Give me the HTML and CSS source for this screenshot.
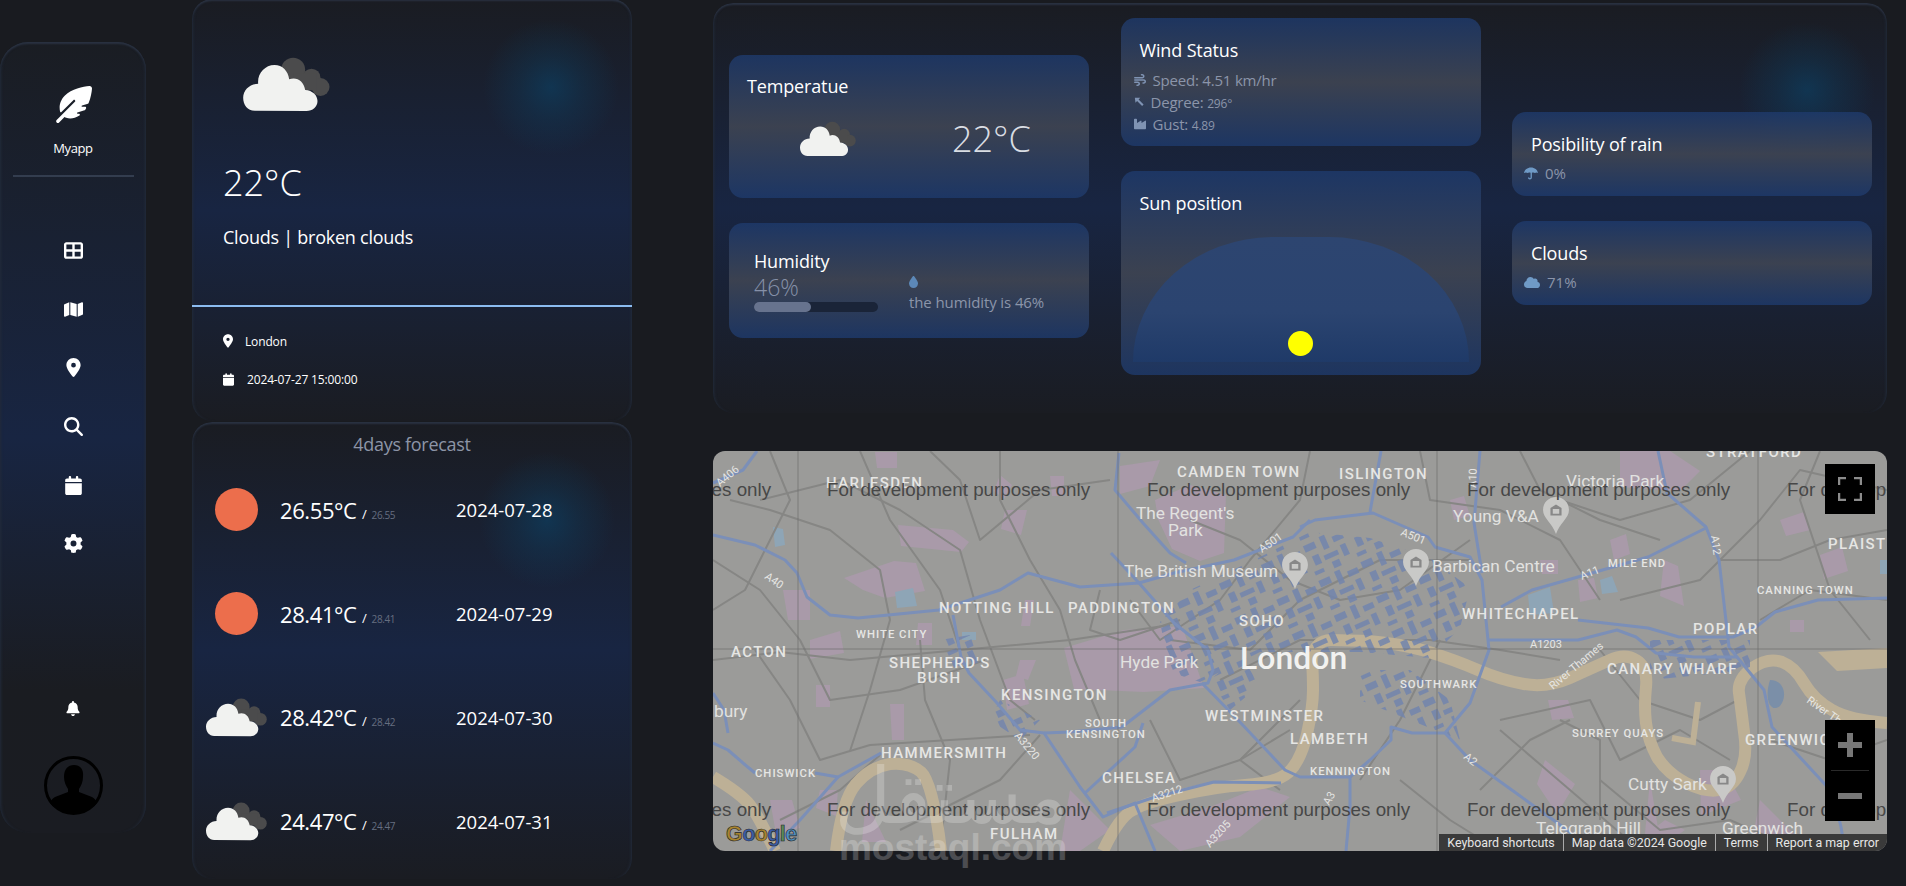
FILE: index.html

```html
<!DOCTYPE html>
<html lang="en">
<head>
    <meta charset="UTF-8">
    <title>Myapp Weather</title>
    <link rel="stylesheet" href="styles.css">
</head>
<body>
<svg class="defs" width="0" height="0">
    <symbol id="clouds" viewBox="130 50 260 165">
        <g fill="#4b4b4c">
            <circle cx="280" cy="88" r="36"/>
            <circle cx="335" cy="112" r="27"/>
            <circle cx="362" cy="140" r="27"/>
            <rect x="280" y="100" width="70" height="50"/>
        </g>
        <path fill="#f1f2f0" d="M165 211C143 211 130 193 130 172C130 148 150 131 175 130C172 100 195 74 224 74C248 74 265 92 268 117C290 108 312 122 316 149C338 150 353 165 353 182C353 200 338 212 320 212Z"/>
    </symbol>
    <symbol id="i-pin" viewBox="0 0 384 512"><path d="M215.7 499.2C267 435 384 279.4 384 192C384 86 298 0 192 0S0 86 0 192c0 87.4 117 243 168.3 307.2c12.3 15.3 35.1 15.3 47.4 0zM192 128a64 64 0 1 1 0 128 64 64 0 1 1 0-128z"/></symbol>
    <symbol id="i-cal" viewBox="0 0 448 512"><path d="M96 32V64H48C21.5 64 0 85.5 0 112v48H448V112c0-26.5-21.5-48-48-48H352V32c0-17.7-14.3-32-32-32s-32 14.3-32 32V64H160V32c0-17.7-14.3-32-32-32S96 14.3 96 32zM448 192H0V464c0 26.5 21.5 48 48 48H400c26.5 0 48-21.5 48-48V192z"/></symbol>
    <symbol id="i-mpin" viewBox="0 0 28 40"><path fill="#c9c9c7" d="M14 0C6 0 0 6 0 14c0 9 10 14 14 26c4-12 14-17 14-26C28 6 22 0 14 0z"/><path fill="#888" d="M8 12l6-4 6 4v8H8zM10.500 13v5h7v-5z"/></symbol>
</svg>

<div class="page">
    <aside class="sidebar">
        <div class="brand">
            <svg class="feather" viewBox="0 0 512 512"><path d="M278.5 215.6L23 471c-9.4 9.4-9.4 24.6 0 33.9s24.6 9.4 33.9 0l74.8-74.8c7.4 4.6 15.3 8.2 23.8 10.5C200.3 452.8 270 454.5 338 409.4c12.2-8.1 5.8-25.4-8.8-25.4l-16.1 0c-5.1 0-9.2-4.1-9.2-9.2c0-4.1 2.7-7.6 6.5-8.8l97.7-29.3c3.4-1 6.4-3.1 8.4-6.1c4.4-6.4 8.6-12.9 12.6-19.6c6.2-10.3-1.5-23-13.5-23l-38.6 0c-5.1 0-9.2-4.1-9.2-9.2c0-4.1 2.7-7.6 6.5-8.8l80.9-24.3c4.6-1.4 8.4-4.8 10.2-9.3C494.5 163 507.8 86.1 511.9 36.8c.8-9.9-3-19.6-10-26.6s-16.7-10.8-26.6-10C391.5 7 228.5 40.5 137.4 131.6C57.3 211.7 56.7 302.3 71.3 356.4c2.1 7.9 12 9.6 17.8 3.8L253.6 195.8c6.2-6.2 16.4-6.2 22.6 0c5.4 5.4 6.1 13.6 2.2 19.8z"/></svg>
            <div class="brand-name">Myapp</div>
        </div>
        <nav class="nav">
            <svg viewBox="0 0 512 512"><path d="M448 96V224H288V96H448zm0 192V416H288V288H448zM224 224H64V96H224V224zM64 288H224V416H64V288zM64 32C28.7 32 0 60.7 0 96V416c0 35.3 28.7 64 64 64H448c35.3 0 64-28.7 64-64V96c0-35.3-28.7-64-64-64H64z"/></svg>
            <svg viewBox="0 0 576 512"><path d="M384 476.1L192 421.2V35.9L384 90.8V476.1zm32-1.2V88.4L543.1 37.5c15.8-6.3 32.9 5.3 32.9 22.3V394.6c0 9.8-6 18.6-15.1 22.3L416 474.8zM15.1 95.1L160 37.2V423.6L32.9 474.5C17.1 480.8 0 469.2 0 452.2V117.4c0-9.8 6-18.6 15.1-22.3z"/></svg>
            <svg><use href="#i-pin"/></svg>
            <svg viewBox="0 0 512 512"><path d="M416 208c0 45.9-14.9 88.3-40 122.7L502.6 457.4c12.5 12.5 12.5 32.8 0 45.3s-32.8 12.5-45.3 0L330.7 376c-34.4 25.2-76.8 40-122.7 40C93.1 416 0 322.9 0 208S93.1 0 208 0S416 93.1 416 208zM208 352a144 144 0 1 0 0-288 144 144 0 1 0 0 288z"/></svg>
            <svg><use href="#i-cal"/></svg>
            <svg viewBox="0 0 512 512"><path d="M495.9 166.6c3.2 8.7 .5 18.4-6.4 24.6l-43.3 39.4c1.1 8.3 1.7 16.8 1.7 25.4s-.6 17.1-1.7 25.4l43.3 39.4c6.9 6.2 9.6 15.9 6.4 24.6c-4.4 11.9-9.7 23.3-15.8 34.3l-4.7 8.1c-6.6 11-14 21.4-22.1 31.2c-5.9 7.2-15.7 9.6-24.5 6.8l-55.7-17.7c-13.4 10.3-28.2 18.9-44 25.4l-12.5 57.1c-2 9.1-9 16.3-18.2 17.8c-13.8 2.3-28 3.5-42.5 3.5s-28.7-1.2-42.5-3.5c-9.2-1.5-16.2-8.7-18.2-17.8l-12.5-57.1c-15.8-6.5-30.6-15.1-44-25.4L83.1 425.9c-8.8 2.8-18.6 .3-24.5-6.8c-8.1-9.8-15.5-20.2-22.1-31.2l-4.7-8.1c-6.1-11-11.4-22.4-15.8-34.3c-3.2-8.7-.5-18.4 6.4-24.6l43.3-39.4C64.6 273.1 64 264.6 64 256s.6-17.1 1.7-25.4L22.4 191.2c-6.9-6.2-9.6-15.9-6.4-24.6c4.4-11.9 9.7-23.3 15.8-34.3l4.7-8.1c6.6-11 14-21.4 22.1-31.2c5.9-7.2 15.7-9.6 24.5-6.8l55.7 17.7c13.4-10.3 28.2-18.9 44-25.4l12.5-57.1c2-9.1 9-16.3 18.2-17.8C227.3 1.2 241.5 0 256 0s28.7 1.2 42.5 3.5c9.2 1.5 16.2 8.7 18.2 17.8l12.5 57.1c15.8 6.5 30.6 15.1 44 25.4l55.7-17.7c8.8-2.8 18.6-.3 24.5 6.8c8.1 9.8 15.5 20.2 22.1 31.2l4.7 8.1c6.1 11 11.4 22.4 15.8 34.3zM256 336a80 80 0 1 0 0-160 80 80 0 1 0 0 160z"/></svg>
        </nav>
        <div class="side-bottom">
            <svg class="bell" viewBox="0 0 448 512"><path d="M224 0c-17.7 0-32 14.3-32 32V51.2C119 66 64 130.6 64 208v18.8c0 47-17.3 92.4-48.5 127.6l-7.4 8.3c-8.4 9.4-10.4 22.9-5.3 34.4S19.4 416 32 416H416c12.6 0 24-7.4 29.2-18.9s3.1-25-5.3-34.4l-7.4-8.3C401.3 319.2 384 273.9 384 226.8V208c0-77.4-55-142-128-156.8V32c0-17.7-14.3-32-32-32zm45.3 493.3c12-12 18.7-28.3 18.7-45.3H224 160c0 17 6.7 33.3 18.7 45.3s28.3 18.7 45.3 18.7s33.3-6.7 45.3-18.7z"/></svg>
            <svg class="avatar" viewBox="0 0 59 59">
                <circle cx="29.5" cy="29.5" r="28" fill="none" stroke="#000" stroke-width="3"/>
                <path d="M20 21c0-8 4-12 10-12s10 4 9 12c0 5-2 9-4 12v3l13 5c2 1 4 3 5 6c-5 6-14 10-23.500 10S11 53 6 47c1-3 3-5 5-6l13-5v-3c-2-3-4-7-4-12z"/>
            </svg>
        </div>
    </aside>

    <section class="left-col">
        <div class="card now">
            <div class="now-top">
                <svg class="icon-big"><use href="#clouds"/></svg>
                <div class="now-temp">22°C</div>
                <div class="now-desc">Clouds | broken clouds</div>
            </div>
            <div class="now-meta">
                <div class="meta-row"><svg class="meta-pin"><use href="#i-pin"/></svg>London</div>
                <div class="meta-row meta-date"><svg class="meta-cal"><use href="#i-cal"/></svg>2024-07-27 15:00:00</div>
            </div>
        </div>
        <div class="card forecast">
            <div class="forecast-title">4days forecast</div>
            <div class="fc-row">
                <div class="fc-icon"><span class="sun-dot"></span></div>
                <div class="fc-temp">26.55°C <small>/</small> <span class="fc-min">26.55</span></div>
                <div class="fc-date">2024-07-28</div>
            </div>
            <div class="fc-row">
                <div class="fc-icon"><span class="sun-dot"></span></div>
                <div class="fc-temp">28.41°C <small>/</small> <span class="fc-min">28.41</span></div>
                <div class="fc-date">2024-07-29</div>
            </div>
            <div class="fc-row">
                <div class="fc-icon"><svg class="icon-fc"><use href="#clouds"/></svg></div>
                <div class="fc-temp">28.42°C <small>/</small> <span class="fc-min">28.42</span></div>
                <div class="fc-date">2024-07-30</div>
            </div>
            <div class="fc-row">
                <div class="fc-icon"><svg class="icon-fc"><use href="#clouds"/></svg></div>
                <div class="fc-temp">24.47°C <small>/</small> <span class="fc-min">24.47</span></div>
                <div class="fc-date">2024-07-31</div>
            </div>
        </div>
    </section>

    <main class="right-col">
        <div class="card panel">
            <div class="col col-a">
                <div class="tile tile-temp">
                    <h4>Temperatue</h4>
                    <div class="temp-body">
                        <svg class="icon-mid"><use href="#clouds"/></svg>
                        <span class="temp-val">22°C</span>
                    </div>
                </div>
                <div class="tile tile-hum">
                    <div class="hum-left">
                        <h4>Humidity</h4>
                        <div class="hum-val">46%</div>
                        <div class="bar"><div class="bar-fill" style="width: 46%"></div></div>
                    </div>
                    <div class="hum-right">
                        <svg class="drop" viewBox="0 0 384 512"><path d="M192 512C86 512 0 426 0 320C0 228.800 130.200 57.700 166.600 11.700C172.600 4.200 181.500 0 191.100 0h1.800c9.600 0 18.500 4.200 24.500 11.700C253.800 57.700 384 228.800 384 320c0 106-86 192-192 192z"/></svg>
                        <div class="sub">the humidity is 46%</div>
                    </div>
                </div>
            </div>
            <div class="col col-b">
                <div class="tile tile-wind">
                    <h4>Wind Status</h4>
                    <div class="wind-row">
                        <svg class="mini" viewBox="0 0 512 512"><path d="M288 32c0 17.700 14.300 32 32 32h32c17.700 0 32 14.300 32 32s-14.300 32-32 32H32c-17.700 0-32 14.300-32 32s14.300 32 32 32H352c53 0 96-43 96-96s-43-96-96-96H320c-17.700 0-32 14.300-32 32zm64 352c0 17.700 14.300 32 32 32h32c53 0 96-43 96-96s-43-96-96-96H32c-17.700 0-32 14.300-32 32s14.300 32 32 32H416c17.700 0 32 14.300 32 32s-14.300 32-32 32H384c-17.700 0-32 14.300-32 32zM128 512h32c53 0 96-43 96-96s-43-96-96-96H32c-17.700 0-32 14.300-32 32s14.300 32 32 32H160c17.700 0 32 14.300 32 32s-14.300 32-32 32H128c-17.700 0-32 14.300-32 32s14.300 32 32 32z"/></svg>
                        <span>Speed: 4.51 km/hr</span>
                    </div>
                    <div class="wind-row">
                        <svg class="mini mini-arrow" viewBox="0 0 12 12"><path d="M1 1h6.500L5.500 3l6 6-1.800 1.800-6-6L1.800 7z"/></svg>
                        <span>Degree: <small>296°</small></span>
                    </div>
                    <div class="wind-row">
                        <svg class="mini" viewBox="0 0 512 512"><path d="M32 32C14.300 32 0 46.300 0 64V448c0 17.700 14.300 32 32 32H480c17.700 0 32-14.300 32-32V135.100c0-18.400-20-30-36-20.700L320 214.800V135.100c0-18.400-20-30-36-20.700L128 214.800V64c0-17.700-14.300-32-32-32H32z"/></svg>
                        <span>Gust: <small>4.89</small></span>
                    </div>
                </div>
                <div class="tile tile-sun">
                    <h4>Sun position</h4>
                    <div class="sun-arc"><span class="sun-ball"></span></div>
                </div>
            </div>
            <div class="col col-c">
                <div class="tile tile-small">
                    <h4>Posibility of rain</h4>
                    <div class="small-row">
                        <svg class="mini-blue" viewBox="0 0 16 14"><path d="M8 0c4 0 7.500 2.500 8 6.500c-1-1-2.500-1-3.500 0c-.8-.8-2.200-1-3.500-.3V11.500c0 3-4.500 3-4.500 0h1.500c0 1.200 1.500 1.200 1.500 0V6.200c-1.300-.7-2.700-.5-3.500.3c-1-1-2.500-1-4 0C.5 2.500 4 0 8 0z"/></svg>
                        <span>0%</span>
                    </div>
                </div>
                <div class="tile tile-small">
                    <h4>Clouds</h4>
                    <div class="small-row">
                        <svg class="mini-blue mini-cloud" viewBox="0 0 640 512"><path d="M0 336c0 79.500 64.500 144 144 144H512c70.700 0 128-57.300 128-128c0-61.900-44-113.600-102.400-125.400c4.100-10.700 6.400-22.400 6.400-34.600c0-53-43-96-96-96c-19.700 0-38.100 6-53.300 16.200C367 64.200 315.300 32 256 32C167.600 32 96 103.600 96 192c0 2.700 .1 5.400 .2 8.100C40.200 219.800 0 273.200 0 336z"/></svg>
                        <span>71%</span>
                    </div>
                </div>
            </div>
        </div>

        <div class="map">
            <svg class="map-canvas" viewBox="713 451 1174 400">
                <defs>
                    <pattern id="blocks" width="46" height="38" patternUnits="userSpaceOnUse" patternTransform="rotate(-24)">
                        <path fill="#7385ad" d="M2 3h12v7H2zM20 1h6v14h-6zM32 6h11v6H32zM6 16h7v10H6zM17 20h15v5H17zM36 17h6v12h-6zM2 31h10v4H2zM22 29h8v7h-8z"/>
                    </pattern>
                </defs>

                <!-- parks and built up patches -->
                <g fill="#a99aa9">
                    <path d="M898 525l55 5 16 12-8 10-60-6zM844 578l50-17 22 2 9 28-40 7-22-8zM1064 648l60-18 58-4 22 62-60 4-70-3zM1155 500l35-15 36 10-2 58-24 8-28-12-14-30zM1120 466l40-6-10 26-30 8z"/>
                    <path d="M875 452h22v16h-20zM1000 475l12 10-8 14-10-8zM1005 510h22l-6 25-20-6zM1050 476h14v20h-12zM783 590h27v30h-22zM918 623h14v22h-16zM1025 600h9l-4 26h-9zM1020 660h16l-8 20-12-4zM1003 680l20-6 6 30-22 6zM810 640l30-9 4 22-34 6zM816 685h14v22h-14zM890 704h14v36h-12zM770 800h22l8 28-24 6zM820 790h18l-2 26-20-8zM866 800l20 42h-24zM1070 790l40 40-30 21h-20zM1150 825l60-18 50-20 30 10-50 40-60 14z"/>
                    <path d="M1620 451h50l30 20-20 20-60-4zM1450 500l14-4 6 20-16 4zM1664 560l14 6 6 40-24-10zM1610 540l16-6 4 20-16 6zM1540 560h18v14h-16zM1578 580l16-2 4 20-18 4zM1820 555l22-8 6 24-24 8zM1790 620h14v12h-14zM1548 700h20l6 18-22 2zM1545 760l30 24-18 30-20-30zM1650 780l10 60-16 4zM1700 770h25l16 30-40 16zM1665 820l20 10-30 21h-30zM1780 520l24-8 6 18-24 6zM1760 800l30 30 20 21h-60z"/>
                </g>
                <g fill="#8ea5b6">
                    <path d="M773 527l10 2 2 16-10 2zM962 632h14v8h-14zM895 592l18-4 4 18-20 2zM1528 595l22-8 4 26-24 2zM1600 580l12-4 6 16-16 2zM1880 560h7v14h-7z"/>
                </g>

                <!-- minor roads -->
                <g class="road-minor">
                    <polyline points="713,610 745,590 760,560 790,500 770,451"/>
                    <polyline points="760,500 840,480 900,510 960,550 980,620 1010,700 1035,720"/>
                    <polyline points="860,451 890,520 940,590 960,650"/>
                    <polyline points="713,660 780,652 850,660 960,650 1070,640 1170,625"/>
                    <polyline points="755,650 790,700 820,760 870,745 1030,735"/>
                    <polyline points="930,451 960,480 980,540 1040,490 1110,480"/>
                    <polyline points="1100,590 1090,630 1120,640 1180,620"/>
                    <polyline points="780,820 840,790 880,755"/>
                    <polyline points="1220,680 1300,640 1430,640 1500,650 1560,660"/>
                    <polyline points="1170,640 1250,650 1300,600 1380,560 1470,560"/>
                    <polyline points="1500,730 1570,790 1640,850"/>
                    <polyline points="1500,720 1590,700 1620,760 1680,730 1730,760"/>
                    <polyline points="1560,500 1620,520 1690,500 1750,451"/>
                    <polyline points="1620,600 1700,580 1760,520 1800,470 1887,490"/>
                    <polyline points="1760,620 1810,590 1887,600"/>
                    <polyline points="1600,650 1640,700 1700,720 1738,700"/>
                    <polyline points="1360,780 1400,720 1440,640"/>
                    <polyline points="1280,790 1240,760 1300,700"/>
                    <polyline points="730,500 770,510 830,530 880,570 890,620 870,690 850,751"/>
                    <polyline points="713,560 760,590 800,640 830,700 900,690 985,660"/>
                    <polyline points="920,640 925,700 950,760 940,851"/>
                    <polyline points="1040,735 1000,780 960,800 900,830"/>
                    <polyline points="1000,451 1000,500 1030,560 1060,610 1075,660 1100,720"/>
                    <polyline points="1130,600 1160,640 1220,600 1250,560 1300,500 1310,451"/>
                    <polyline points="1150,720 1180,780 1240,760 1290,730"/>
                    <polyline points="1190,520 1240,540 1290,580 1340,600 1400,590 1470,540"/>
                    <polyline points="1420,451 1430,500 1500,510 1560,540 1600,600"/>
                    <polyline points="1520,451 1540,490 1600,520 1660,540"/>
                    <polyline points="1560,720 1600,740 1600,820"/>
                    <polyline points="1480,790 1530,740 1570,720"/>
                    <polyline points="1720,560 1780,560 1830,540 1887,530"/>
                    <polyline points="1770,740 1830,760 1887,740"/>
                    <polyline points="1400,780 1450,820 1500,851"/>
                    <polyline points="1600,780 1660,830 1730,820 1800,851"/>
                    <polyline points="1820,451 1800,500 1830,590 1870,640"/>
                </g>

                <!-- river -->
                <g class="river">
                    <path d="M1103 851Q1119 817 1133 810Q1147 802 1180 795Q1214 787 1245 785Q1277 783 1289 772Q1301 760 1307 734Q1313 707 1313 690Q1313 673 1312 662Q1312 650 1318 645Q1323 640 1331 640Q1339 640 1368 641Q1397 643 1426 651Q1455 660 1478 670Q1501 680 1524 684Q1547 688 1570 678Q1594 667 1610 660Q1625 653 1636 660Q1648 667 1646 687Q1644 707 1646 723Q1648 740 1657 757Q1667 773 1686 783Q1706 793 1720 790Q1733 787 1740 772Q1748 757 1744 732Q1741 707 1739 693Q1737 680 1752 668Q1768 657 1782 662Q1795 667 1804 683Q1814 700 1832 710Q1849 720 1887 723"/>
                    <path d="M836 851Q842 800 856 784Q870 767 890 764Q909 762 921 772Q933 783 941 851"/>
                    <path d="M713 777Q740 793 750 805Q759 817 775 851"/>
                </g>
                <polyline class="dock" points="1672,738 1693,742 1698,702"/>
                <path fill="#bdb096" d="M1818 652l69-4v20l-50 3z"/>

                <!-- city centre blocks -->
                <g class="blocks">
                    <path fill="url(#blocks)" d="M1190 590l60-28 60-30 60 6 60 20 40 30-10 40-30 30-70-6-100 0-60 30-30-10-10-50zM1360 670l50 0 40 30 10 40-50-20-50-20zM1210 680l30-25 20 30-30 25z"/>
                    <path fill="url(#blocks)" d="M1650 640l100 0 0 30-100 10zM1000 700l40 20-20 20-30-20zM940 640l30-5 10 30-30 5z"/>
                </g>
                <path fill="#7b8fa8" d="M1770 680c14 0 18 16 10 26c-10 8-16-8-10-26z"/>

                <!-- motorways -->
                <g class="road">
                    <polyline points="713,535 755,545 785,560 797,573 807,597 830,615 858,618 939,610 1000,590 1028,573 1080,587 1139,583 1174,573 1234,560 1293,537 1310,520"/>
                    <polyline points="953,615 961,657 969,673 997,703 1020,730 1044,733 1080,787 1103,817 1135,803 1155,851"/>
                    <polyline points="1044,733 1070,732 1122,727 1170,690 1208,683 1213,670 1208,650 1174,623 1139,583 1111,553"/>
                    <polyline points="1119,453 1115,490 1143,523 1170,553 1186,563"/>
                    <polyline points="881,753 838,777 815,773"/>
                    <polyline points="838,777 800,820 770,851"/>
                    <polyline points="757,451 743,470 713,483"/>
                    <polyline points="713,743 728,750 743,763 755,773"/>
                    <polyline points="713,693 724,710 728,733"/>
                    <polyline points="1202,683 1238,720 1285,770 1300,777 1350,777 1370,760 1391,740 1391,727 1412,733 1445,733 1470,703 1489,650 1482,580 1470,557 1435,547 1428,537 1373,513 1315,520 1300,527"/>
                    <polyline points="1480,451 1474,523 1482,573"/>
                    <polyline points="1381,451 1370,512"/>
                    <polyline points="1501,607 1532,590 1578,577 1648,557 1706,528"/>
                    <polyline points="1658,451 1667,493 1706,527 1719,560 1729,647 1737,657 1764,690 1772,727 1833,793 1841,827 1845,851"/>
                    <polyline points="1489,640 1578,640 1617,630 1636,637 1656,653 1694,657 1737,657"/>
                    <polyline points="1578,620 1648,628 1679,637 1733,637 1756,627 1775,612 1818,600 1887,598"/>
                    <polyline points="1445,733 1470,760 1516,793 1563,827 1594,851"/>
                    <polyline points="1350,777 1350,807 1346,851"/>
                    <polyline points="1085,793 1135,747 1143,723"/>
                    <polyline points="1107,813 1155,797 1214,782 1281,783"/>
                </g>

                <!-- tile seams -->
                <g class="seam">
                    <line x1="798" y1="451" x2="798" y2="851"/>
                    <line x1="1118" y1="451" x2="1118" y2="851"/>
                    <line x1="1437" y1="451" x2="1437" y2="851"/>
                    <line x1="1758" y1="451" x2="1758" y2="851"/>
                    <line x1="713" y1="649" x2="1887" y2="649"/>
                </g>

                <!-- pins -->
                <use href="#i-mpin" x="1282" y="552" width="26" height="37"/>
                <use href="#i-mpin" x="1403" y="549" width="26" height="37"/>
                <use href="#i-mpin" x="1543" y="497" width="26" height="37"/>
                <use href="#i-mpin" x="1710" y="766" width="26" height="37"/>

                <!-- place names -->
                <g class="lbl">
                    <text x="826" y="488">HARLESDEN</text>
                    <text x="1177" y="477">CAMDEN TOWN</text>
                    <text x="1339" y="479">ISLINGTON</text>
                    <text x="1706" y="457">STRATFORD</text>
                    <text x="1828" y="549">PLAIST</text>
                    <text x="939" y="613">NOTTING HILL</text>
                    <text x="1068" y="613">PADDINGTON</text>
                    <text x="1239" y="626">SOHO</text>
                    <text x="731" y="657">ACTON</text>
                    <text x="889" y="668">SHEPHERD'S</text>
                    <text x="917" y="683">BUSH</text>
                    <text x="1001" y="700">KENSINGTON</text>
                    <text x="1205" y="721">WESTMINSTER</text>
                    <text x="1290" y="744">LAMBETH</text>
                    <text x="881" y="758">HAMMERSMITH</text>
                    <text x="1102" y="783">CHELSEA</text>
                    <text x="990" y="839">FULHAM</text>
                    <text x="1462" y="619">WHITECHAPEL</text>
                    <text x="1693" y="634">POPLAR</text>
                    <text x="1607" y="674">CANARY WHARF</text>
                    <text x="1745" y="745">GREENWIC</text>
                </g>
                <g class="lbl lbl-small">
                    <text x="856" y="638">WHITE CITY</text>
                    <text x="755" y="777">CHISWICK</text>
                    <text x="1085" y="727">SOUTH</text>
                    <text x="1066" y="738">KENSINGTON</text>
                    <text x="1608" y="567">MILE END</text>
                    <text x="1757" y="594">CANNING TOWN</text>
                    <text x="1400" y="688">SOUTHWARK</text>
                    <text x="1572" y="737">SURREY QUAYS</text>
                    <text x="1310" y="775">KENNINGTON</text>
                </g>
                <g class="poi">
                    <text x="1136" y="519">The Regent's</text>
                    <text x="1168" y="536">Park</text>
                    <text x="1124" y="577">The British Museum</text>
                    <text x="1120" y="668">Hyde Park</text>
                    <text x="714" y="717">bury</text>
                    <text x="1566" y="487">Victoria Park</text>
                    <text x="1453" y="522">Young V&amp;A</text>
                    <text x="1432" y="572">Barbican Centre</text>
                    <text x="1628" y="790">Cutty Sark</text>
                    <text x="1536" y="834">Telegraph Hill</text>
                    <text x="1722" y="834">Greenwich</text>
                </g>
                <g class="rlbl">
                    <text transform="translate(764 578) rotate(35)">A40</text>
                    <text transform="translate(720 487) rotate(-40)">A406</text>
                    <text transform="translate(1014 736) rotate(50)">A3220</text>
                    <text transform="translate(1153 802) rotate(-18)">A3212</text>
                    <text transform="translate(1210 848) rotate(-48)">A3205</text>
                    <text transform="translate(1262 553) rotate(-35)">A501</text>
                    <text transform="translate(1400 535) rotate(22)">A501</text>
                    <text transform="translate(1582 580) rotate(-22)">A11</text>
                    <text transform="translate(1711 536) rotate(82)">A12</text>
                    <text transform="translate(1476 488) rotate(-88)">A10</text>
                    <text transform="translate(1463 758) rotate(38)">A2</text>
                    <text transform="translate(1329 806) rotate(-60)">A3</text>
                    <text x="1530" y="648">A1203</text>
                    <text transform="translate(1553 690) rotate(-40)">River Thames</text>
                    <text transform="translate(1806 702) rotate(35)">River Thames</text>
                </g>
                <text class="city" x="1240" y="669">London</text>

                <!-- dev watermark -->
                <g class="dev">
                    <text x="508" y="496">For development purposes only</text>
                    <text x="827" y="496">For development purposes only</text>
                    <text x="1147" y="496">For development purposes only</text>
                    <text x="1467" y="496">For development purposes only</text>
                    <text x="1787" y="496">For development purposes only</text>
                    <text x="508" y="816">For development purposes only</text>
                    <text x="827" y="816">For development purposes only</text>
                    <text x="1147" y="816">For development purposes only</text>
                    <text x="1467" y="816">For development purposes only</text>
                    <text x="1787" y="816">For development purposes only</text>
                </g>

                <text class="glogo" x="726" y="841"><tspan fill="#a8842f">G</tspan><tspan fill="#3b5da6">o</tspan><tspan fill="#a8842f">o</tspan><tspan fill="#3b5da6">g</tspan><tspan fill="#5a8a5a">l</tspan><tspan fill="#4f8fc0">e</tspan></text>
            </svg>

            <button class="map-btn btn-full">
                <svg viewBox="0 0 24 24"><path d="M1 8V1h7M16 1h7v7M23 16v7h-7M8 23H1v-7" fill="none" stroke="#8c8c8c" stroke-width="2.500"/></svg>
            </button>
            <div class="map-btn zoom-box">
                <div class="zoom-plus"></div>
                <div class="zoom-sep"></div>
                <div class="zoom-minus"></div>
            </div>
            <div class="attrib">
                <span>Keyboard shortcuts</span>
                <span>Map data ©2024 Google</span>
                <span>Terms</span>
                <span>Report a map error</span>
            </div>
        </div>
    </main>
</div>

<div class="stamp" aria-hidden="true">
    <div class="stamp-ar" dir="rtl" lang="ar">مستقل</div>
    <div class="stamp-en">mostaql.com</div>
</div>
</body>
</html>
```

FILE: styles.css

```css
* {
    box-sizing: border-box;
}
body {
    margin: 0;
    height: 886px;
    overflow: hidden;
    position: relative;
    background-color: #191b20;
    font-family: "Open Sans", "Noto Sans", sans-serif;
    color: #fff;
}
.defs {
    position: absolute;
}
.page {
    display: flex;
    align-items: flex-start;
}

/* shared dark glass card */
.card {
    border-radius: 20px;
    box-shadow: inset 0 3px 2px -1px #2a3242, inset 3px 0 3px -2px #232c3b, inset -3px 0 3px -2px #232c3b;
    background:
        radial-gradient(circle 68px at var(--glow-x, 88%) var(--glow-y, 87px), rgba(12, 66, 102, 0.62), rgba(12, 66, 102, 0.3) 45%, rgba(12, 66, 102, 0) 100%),
        linear-gradient(180deg, #1a1c22 0%, #182542 50%, #1a1c22 100%);
}

/* sidebar */
.sidebar {
    width: 146px;
    height: 791px;
    margin-top: 42px;
    border-radius: 28px;
    display: flex;
    flex-direction: column;
    align-items: center;
    box-shadow: inset 0 3px 2px -1px #2a3242, inset 3px 0 3px -2px #232c3b, inset -3px 0 3px -2px #232c3b;
    background: linear-gradient(180deg, #1a1d23 0%, #182542 50%, #1a1c21 82%, #1a1c22 100%);
}
.brand {
    width: 121px;
    height: 135px;
    padding-top: 44px;
    border-bottom: 2px solid #333d4f;
    text-align: center;
}
.feather {
    width: 37px;
    height: 37px;
    fill: #fff;
    display: block;
    margin: 0 auto;
}
.brand-name {
    margin-top: 16px;
    font-size: 13px;
    line-height: 18px;
    letter-spacing: -0.4px;
}
.nav {
    margin-top: 64px;
    display: flex;
    flex-direction: column;
    gap: 39.7px;
}
.nav svg {
    width: 19px;
    height: 19px;
    fill: #fff;
    display: block;
}
.side-bottom {
    margin-top: auto;
    padding-bottom: 18px;
    display: flex;
    flex-direction: column;
    align-items: center;
    gap: 40px;
}
.bell {
    width: 14px;
    height: 15px;
    fill: #fff;
}
.avatar {
    width: 59px;
    height: 59px;
    fill: #000;
}

/* left column */
.left-col {
    width: 440px;
    margin-left: 46px;
    margin-top: -1px;
    display: flex;
    flex-direction: column;
    gap: 1px;
}
.now {
    height: 422px;
    --glow-x: 359px;
    --glow-y: 88px;
}
.now-top {
    height: 308px;
    padding: 58px 0 0 31px;
    border-bottom: 2px solid #8cbcf0;
}
.icon-big {
    display: block;
    width: 87px;
    height: 55px;
    margin-left: 20px;
}
.now-temp {
    margin-top: 46px;
    font-size: 36px;
    font-weight: 300;
    line-height: 50px;
}
.now-desc {
    margin-top: 17px;
    font-size: 18px;
    line-height: 24px;
    letter-spacing: -0.25px;
}
.now-meta {
    padding: 26px 0 0 31px;
    font-size: 12px;
    letter-spacing: -0.15px;
}
.meta-row {
    display: flex;
    align-items: center;
    height: 16px;
}
.meta-date {
    margin-top: 22px;
}
.meta-pin {
    width: 10px;
    height: 14px;
    fill: #fff;
    margin-right: 12px;
}
.meta-cal {
    width: 11px;
    height: 13px;
    fill: #fff;
    margin-right: 13px;
}
.forecast {
    height: 457px;
    --glow-x: 355px;
    --glow-y: 98px;
}
.forecast-title {
    padding-top: 10px;
    height: 36px;
    text-align: center;
    color: #8d95a7;
    font-size: 18px;
    line-height: 24px;
    letter-spacing: -0.3px;
}
.fc-row {
    height: 103.8px;
    display: flex;
    align-items: center;
    padding-left: 14px;
}
.fc-icon {
    width: 74px;
    display: flex;
    align-items: center;
}
.sun-dot {
    width: 43px;
    height: 43px;
    margin-left: 9px;
    border-radius: 50%;
    background-color: #ec6e4c;
}
.icon-fc {
    width: 61px;
    height: 39px;
}
.fc-temp {
    width: 176px;
    font-size: 22px;
    letter-spacing: -0.4px;
    white-space: nowrap;
}
.fc-temp small {
    font-size: 13px;
}
.fc-min {
    font-size: 10px;
    color: #666e80;
    letter-spacing: -0.4px;
}
.fc-date {
    font-size: 18.5px;
}

/* right side */
.right-col {
    width: 1174px;
    margin-left: 81px;
    margin-top: 3px;
}
.panel {
    height: 410px;
    display: flex;
    align-items: flex-start;
    padding-left: 16px;
    gap: 31.5px;
    --glow-x: 1094px;
    --glow-y: 87px;
}
.col {
    width: 360px;
    display: flex;
    flex-direction: column;
    gap: 25px;
}
.col-a {
    margin-top: 52px;
}
.col-b {
    margin-top: 15px;
}
.col-c {
    margin-top: 109px;
}
.tile {
    border-radius: 14px;
    background: linear-gradient(180deg, rgba(30, 58, 108, 0.82) 0%, rgba(64, 70, 84, 0.88) 50%, rgba(30, 58, 108, 0.82) 100%);
}
.tile h4 {
    margin: 0;
    font-size: 18px;
    font-weight: 400;
    line-height: 24px;
    letter-spacing: -0.15px;
}
.tile-temp {
    height: 143px;
    padding: 19px 0 0 18px;
}
.temp-body {
    display: flex;
    align-items: center;
    margin-top: 16px;
}
.icon-mid {
    width: 56px;
    height: 36px;
    margin-left: 53px;
}
.temp-val {
    margin-left: 96px;
    font-size: 36px;
    font-weight: 300;
    line-height: 50px;
    color: #d9dde3;
}
.tile-hum {
    height: 115px;
    display: flex;
    padding: 26px 0 0 25px;
}
.hum-left {
    width: 155px;
}
.hum-val {
    font-size: 23px;
    font-weight: 300;
    line-height: 28px;
    color: #8590a8;
}
.bar {
    width: 124px;
    height: 10px;
    margin-top: 1px;
    border-radius: 5px;
    background-color: #1a2438;
}
.bar-fill {
    height: 100%;
    border-radius: 5px;
    background-color: #67738e;
}
.hum-right {
    padding-top: 27px;
}
.drop {
    display: block;
    width: 9px;
    height: 12px;
    fill: #5c88b8;
}
.sub {
    margin-top: 4px;
    font-size: 15px;
    line-height: 20px;
    letter-spacing: -0.1px;
    color: #8b95aa;
    white-space: nowrap;
}
.tile-wind {
    height: 128px;
    padding: 20px 0 0 13px;
}
.tile-wind h4 {
    padding-left: 6px;
    margin-bottom: 7px;
}
.wind-row {
    display: flex;
    align-items: center;
    gap: 7px;
    height: 22px;
    font-size: 15px;
    letter-spacing: -0.2px;
    color: #8b95aa;
    white-space: nowrap;
}
.wind-row small {
    font-size: 12px;
}
.mini {
    width: 12px;
    height: 12px;
    fill: #7f93b3;
}
.mini-arrow {
    width: 10px;
    height: 10px;
}
.tile-sun {
    height: 204px;
    padding: 20px 12px 0;
}
.tile-sun h4 {
    padding-left: 7px;
}
.sun-arc {
    height: 125px;
    margin-top: 22px;
    border-radius: 140px 140px 0 0 / 125px 125px 0 0;
    background: linear-gradient(180deg, #2d4570 0%, #2b4470 60%, #1f3a68 100%);
    display: flex;
    justify-content: center;
    padding-top: 94px;
}
.sun-ball {
    width: 25px;
    height: 25px;
    border-radius: 50%;
    background-color: #ff0;
}
.tile-small {
    height: 84px;
    padding: 20px 0 0 12px;
}
.tile-small h4 {
    padding-left: 7px;
}
.small-row {
    display: flex;
    align-items: center;
    gap: 7px;
    margin-top: 7px;
    font-size: 15px;
    line-height: 20px;
    color: #8b95aa;
}
.mini-blue {
    width: 14px;
    height: 13px;
    fill: #6f9ac6;
}
.mini-cloud {
    width: 16px;
}

/* map */
.map {
    position: relative;
    height: 400px;
    margin-top: 38px;
    border-radius: 12px;
    overflow: hidden;
    background-color: #9b9b99;
}
.map-canvas {
    display: block;
    width: 100%;
    height: 100%;
}
.road-minor polyline {
    fill: none;
    stroke: #868684;
    stroke-width: 2;
    stroke-linejoin: round;
}
.road polyline {
    fill: none;
    stroke: #7b8fb8;
    stroke-width: 3;
    stroke-linejoin: round;
}
.river path {
    fill: none;
    stroke: #bdb096;
    stroke-width: 12;
}
.dock {
    fill: none;
    stroke: #bdb096;
    stroke-width: 6;
}
.blocks {
    opacity: 0.85;
}
.seam line {
    stroke: #6e6e6e;
    stroke-width: 0.7;
}
.lbl text {
    font-family: Roboto, sans-serif;
    font-weight: 500;
    font-size: 15px;
    letter-spacing: 1.4px;
    fill: #e6e6e4;
}
.lbl-small text {
    font-size: 11.3px;
    letter-spacing: 1px;
}
.poi text {
    font-family: Roboto, sans-serif;
    font-size: 17.3px;
    fill: #e2e2e0;
}
.rlbl text {
    font-family: Roboto, sans-serif;
    font-size: 11px;
    fill: #e6e6e4;
}
.city {
    font-family: Roboto, sans-serif;
    font-weight: 500;
    font-size: 32px;
    fill: #f2f2f0;
}
.dev text {
    font-family: "Liberation Sans", sans-serif;
    font-size: 18.8px;
    fill: #474747;
}
.glogo {
    font-family: "Liberation Sans", sans-serif;
    font-weight: 700;
    font-size: 21.5px;
    letter-spacing: -0.6px;
    stroke: #222;
    stroke-width: 0.6;
}
.map-btn {
    position: absolute;
    left: 1112px;
    width: 50px;
    background-color: #000;
}
.btn-full {
    top: 13px;
    height: 50px;
    padding: 12px 13px;
    border: 0;
    border-radius: 0;
}
.btn-full svg {
    display: block;
    width: 24px;
    height: 24px;
}
.zoom-box {
    top: 269px;
    height: 101px;
}
.zoom-plus, .zoom-minus {
    position: relative;
    height: 50px;
}
.zoom-plus::before, .zoom-plus::after, .zoom-minus::before {
    content: "";
    position: absolute;
    left: 13px;
    top: 22px;
    width: 24px;
    height: 6px;
    background-color: #777;
}
.zoom-plus::after {
    left: 22px;
    top: 13px;
    width: 6px;
    height: 24px;
}
.zoom-sep {
    height: 1px;
    margin: 0 6px;
    background-color: #2a2a2a;
}
.attrib {
    position: absolute;
    right: 0;
    bottom: 0;
    height: 17px;
    display: flex;
    background-color: #3a3a3a;
    font-family: Roboto, sans-serif;
    font-size: 12.4px;
    line-height: 18px;
    color: #e6e6e6;
    white-space: nowrap;
}
.attrib span {
    padding: 0 8px;
    border-left: 1px solid #aaa;
}
.attrib span:first-child {
    border-left: 0;
}

/* site stamp laid over the shot */
.stamp {
    position: absolute;
    left: 838px;
    top: 760px;
    width: 230px;
    text-align: center;
    color: #fff;
    opacity: 0.22;
    pointer-events: none;
}
.stamp-ar {
    font-family: "DejaVu Sans", sans-serif;
    font-size: 78px;
    line-height: 72px;
}
.stamp-en {
    font-family: "Liberation Sans", sans-serif;
    font-weight: 700;
    font-size: 37px;
    line-height: 32px;
}
```
